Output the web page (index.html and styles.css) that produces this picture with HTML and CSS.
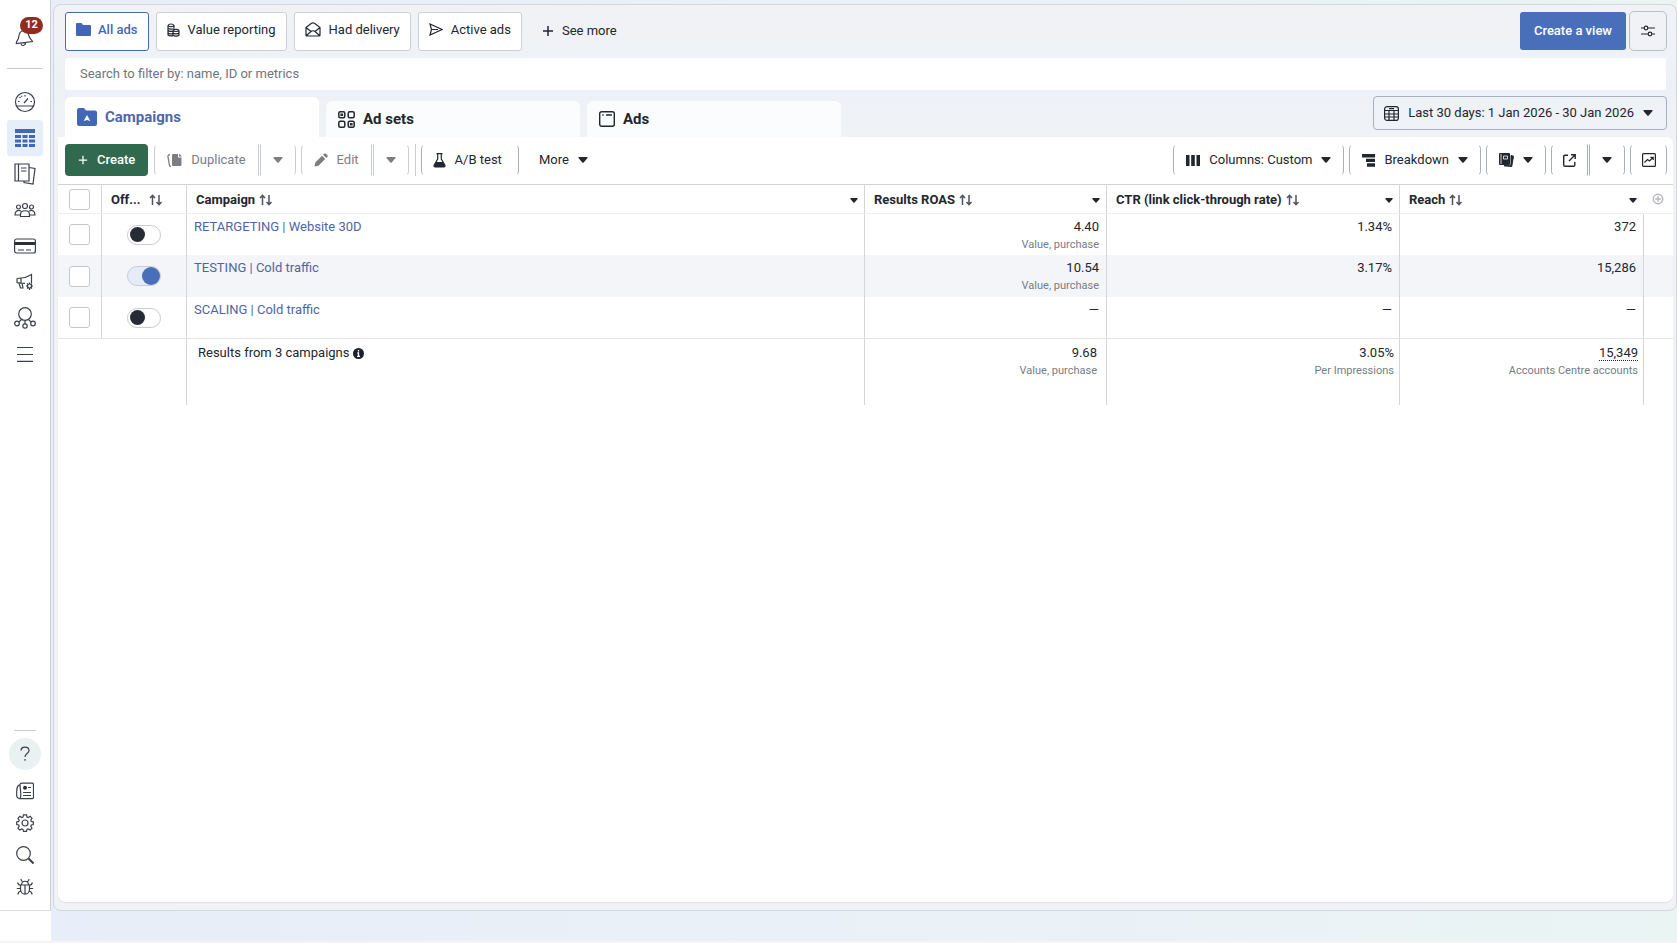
FILE: index.html
```
<!DOCTYPE html>
<html lang="en">
<head>
  <meta charset="UTF-8">
  <title>Ads Manager - Campaigns</title>
  <link rel="stylesheet" href="styles.css">
</head>
<body>
  <!-- shared icons -->
  <svg class="sprite" aria-hidden="true">
    <symbol id="caret" viewBox="0 0 10 6"><path d="M1 0h8q1 0 .5 1L5.700 5.500q-.7.7-1.400 0L.5 1Q0 0 1 0z" fill="currentColor"/></symbol>
    <symbol id="sort" viewBox="0 0 14 12"><path d="M3.500 11V1.500M1 4l2.500-2.700L6 4M10 1v9.500M7.500 8l2.500 2.700L12.500 8" fill="none" stroke="currentColor" stroke-width="1.500"/></symbol>
    <symbol id="plus" viewBox="0 0 12 12"><path d="M6 1v10M1 6h10" stroke="currentColor" stroke-width="1.500"/></symbol>
  </svg>

  <nav class="sidebar">
    <a href="#" class="side-link bell" aria-label="Notifications">
      <svg width="20" height="20" viewBox="0 0 20 20"><path d="M8 2.500C4.500 3.500 4 6 3.700 9 3.500 12 1 13 1.300 15.500L17.500 13.500C17 11.500 15 11.500 14 8 13 4 11 2 8 2.500zM6 15.500c.5 3 4.500 2.500 4.700-.7"/></svg>
      <span class="badge">12</span>
    </a>
    <hr>
    <a href="#" class="side-link" aria-label="Overview">
      <svg width="22" height="22" viewBox="0 0 22 22"><circle cx="11" cy="11" r="9.500"/><path d="M2.500 15h17M10 12l4-4.500M11 4v1.500M5.500 6l1 1M4 10.500h1.500M16.500 10.500H18M7.500 4.700l.5 1"/></svg>
    </a>
    <a href="#" class="side-link active" aria-label="Campaigns">
      <svg width="20" height="20" viewBox="0 0 20 20"><path class="fill" d="M0 1h20v4H0zM0 7h6v3H0zM7.500 7h5v3h-5zM14 7h6v3h-6zM0 11.500h6v3H0zM7.500 11.500h5v3h-5zM14 11.500h6v3h-6zM0 16h6v3H0zM7.500 16h5v3h-5zM14 16h6v3h-6z"/></svg>
    </a>
    <a href="#" class="side-link" aria-label="Ads reporting">
      <svg width="22" height="22" viewBox="0 0 22 22"><path d="M1 1h14v17H1zM4.500 1v17M7 5h5.500M7 8h5.500M15 4.500l6 1-2 15.500-9-1.500v-1.500"/></svg>
    </a>
    <a href="#" class="side-link" aria-label="Audiences">
      <svg width="22" height="16" viewBox="0 0 22 16"><circle cx="11" cy="4" r="2.500"/><circle cx="4.500" cy="5" r="2"/><circle cx="17.500" cy="5" r="2"/><path d="M6.500 14.500v-2c0-5 9-5 9 0v2zM6.500 13H1c0-4 2.500-5.500 6-4M15.500 13H21c0-4-2.500-5.500-6-4"/></svg>
    </a>
    <a href="#" class="side-link" aria-label="Billing">
      <svg width="22" height="16" viewBox="0 0 22 16"><rect x=".6" y="1" width="20.800" height="14" rx="2"/><path d="M4 12h6M12 12h5"/><path class="fill" d="M1 4h20v3H1z"/></svg>
    </a>
    <a href="#" class="side-link" aria-label="Advertising settings">
      <svg width="18" height="18" viewBox="0 0 18 18"><path d="M1 5.500L5 5c5 0 8-2 10.500-3.500V10M1 5.500V9.500c1 .8 6 .3 8 .8M5 5v5M3 10l1.500 5H7l-1-5"/><circle cx="13.500" cy="13" r="2"/><path d="M13.500 9.500v1.500M13.500 15v2M10 13h1.500M15.500 13H17M11 10.500l1.200 1.200M16 10.500l-1.200 1.200M11 15.500l1.200-1.200M16 15.500l-1.200-1.200"/></svg>
    </a>
    <a href="#" class="side-link" aria-label="Events Manager">
      <svg width="22" height="22" viewBox="0 0 22 22"><circle cx="11" cy="7" r="6.300"/><circle cx="3" cy="16.500" r="2.300"/><circle cx="19" cy="16.500" r="2.300"/><circle cx="11" cy="19" r="2.200"/><path d="M11 13.500v3.300M7.500 12.500l-2.700 2.700M14.500 12.500l2.700 2.700"/></svg>
    </a>
    <a href="#" class="side-link" aria-label="All tools">
      <svg width="16" height="16" viewBox="0 0 16 16"><path d="M0 1.500h16M0 8.500h16M0 15.400h16"/></svg>
    </a>

    <div class="side-bottom">
      <hr>
      <a href="#" class="side-link help" aria-label="Help">
        <svg width="12" height="16" viewBox="0 0 12 16"><path d="M2 4.500C2 0 10 0 10 4.500c0 3-4 3-4 6.500M6 13v1.700"/></svg>
      </a>
      <a href="#" class="side-link" aria-label="News">
        <svg width="18" height="18" viewBox="0 0 18 18"><path d="M4 16.500C.5 16.500.5 14 .7 10 .8 6 1 3.500 4 2.500M4 2.500C4 1.500 5 1.200 6 1.200h10c1 0 1.500.5 1.500 1.500v12.500c0 1-.5 1.500-1.500 1.500H4C6 14 4 8 4 2.500zM7 10.500h8M7 13.500h8M12 5.500h3"/><circle class="fill" cx="9" cy="5.800" r="2"/></svg>
      </a>
      <a href="#" class="side-link" aria-label="Settings">
        <svg width="18" height="18" viewBox="0 0 18 18"><circle cx="9" cy="9" r="3"/><path d="M7.500.8h3l.5 2.200 1.300.5L14.200 2.300l1.800 1.900-1.200 1.900.5 1.300 2 .5v2.600l-2 .5-.5 1.300 1.200 1.900-1.800 1.900-1.900-1.200-1.300.5-.5 2h-3L7 15.400l-1.300-.5-1.900 1.200L2 14.200l1.200-1.900L2.700 11l-2-.5V7.900l2-.5.5-1.300L2 4.200l1.800-1.900 1.900 1.200L7 3z"/></svg>
      </a>
      <a href="#" class="side-link" aria-label="Search">
        <svg width="18" height="18" viewBox="0 0 18 18"><circle cx="7.500" cy="7.500" r="6.800"/><path d="M12.500 12.500l5 5" stroke-width="2"/></svg>
      </a>
      <a href="#" class="side-link" aria-label="Report a problem">
        <svg width="18" height="18" viewBox="0 0 18 18"><path d="M4.500 7h9v4c0 7-9 7-9 0zM5.500 7c0-5 7-5 7 0M9 7v9M5 1c0 2 1 2.500 2 2.800M13 1c0 2-1 2.500-2 2.800M1.500 4.500C2 6.500 3 7 4.500 7.500M16.500 4.500C16 6.500 15 7 13.500 7.500M.8 10.500h3.700M13.500 10.500h3.700M5 13c-2 .5-3 1.500-3 3.500M13 13c2 .5 3 1.500 3 3.500"/></svg>
      </a>
    </div>
  </nav>

  <main class="panel">
    <div class="views">
      <button class="pill selected">
        <svg width="15" height="13" viewBox="0 0 15 13"><path d="M1 0h4.500L7 2h7q1 0 1 1v9q0 1-1 1H1q-1 0-1-1V1q0-1 1-1z" fill="currentColor"/></svg>
        All ads
      </button>
      <button class="pill">
        <svg class="line" width="13" height="14" viewBox="0 0 13 14"><path d="M1 2.500v9.500c1 1 3 1 5 .7M1 2.500C2 .5 6 .5 7 2.500c-1 1.500-5 1.500-6 0M7 2.500v3M1 5c1 1.300 4 1.300 5.500.7M1 7.500c1 1 3 1 4.500.7M1 10c1 1 3 1 4.500.7M6 7.500v4.700c1 1.300 5 1.300 6 0V7.500M6 7.500C7 6 11 6 12 7.500c-1 1.300-5 1.300-6 0M6 10c1 1.200 5 1.200 6 0"/></svg>
        Value reporting
      </button>
      <button class="pill">
        <svg class="line" width="16" height="15" viewBox="0 0 16 15"><path d="M1 5.500L6.500 1.200q1.500-.8 3 0L15 5.500V13q0 1-1 1H2q-1 0-1-1zM1 5.500L6 9.500M15 5.500L10 9.500M1.500 13.500L6 9.500q2-1.500 4 0l4.500 4"/></svg>
        Had delivery
      </button>
      <button class="pill">
        <svg class="line" width="14" height="13" viewBox="0 0 14 13"><path d="M1 1l12 5.500L1 12l1.500-5.500zM2.500 6.500H9"/></svg>
        Active ads
      </button>
      <button class="see-more"><svg width="12" height="12"><use href="#plus"/></svg>See more</button>
      <button class="create-view">Create a view</button>
      <button class="customise" aria-label="Customise views">
        <svg class="line" width="14" height="12" viewBox="0 0 14 12"><path d="M0 3h3M7 3h7M0 9h7M11 9h3"/><circle cx="5" cy="3" r="1.800"/><circle cx="9" cy="9" r="1.800"/></svg>
      </button>
    </div>

    <input class="search" type="text" aria-label="Search" placeholder="Search to filter by: name, ID or metrics">

    <div class="tab-row">
      <button class="tab current">
        <svg width="20" height="18" viewBox="0 0 20 18"><path d="M2 0h5l2 2.500h9q2 0 2 2V16q0 2-2 2H2q-2 0-2-2V2Q0 0 2 0z" fill="currentColor"/><path d="M10 7l3.300 6L10 12l-3.300 1z" fill="#fff"/></svg>
        Campaigns
      </button>
      <button class="tab">
        <svg class="line" width="17" height="17" viewBox="0 0 17 17"><g stroke-width="1.500"><rect x=".8" y=".8" width="6" height="6" rx="1.500"/><rect x="10.200" y=".8" width="6" height="6" rx="1.500"/><rect x=".8" y="10.200" width="6" height="6" rx="1.500"/><rect x="10.200" y="10.200" width="6" height="6" rx="1.500"/></g><path d="M3 3h1.500v1.500H3zM12.500 12.500H14V14h-1.500z"/></svg>
        Ad sets
      </button>
      <button class="tab">
        <svg class="line" width="16" height="16" viewBox="0 0 16 16"><rect x=".7" y=".7" width="14.600" height="14.600" rx="2" stroke-width="1.400"/><path d="M3.300 4h1.400M7 4h6" stroke-width="1.400"/></svg>
        Ads
      </button>
      <button class="date-range">
        <svg class="line" width="15" height="15" viewBox="0 0 15 15"><rect x=".6" y=".6" width="13.800" height="13.800" rx="2.500"/><path d="M1 4.500h13M1 8h13M1 11h13M5 4.500v10M10 4.500v10M5 2.700h5"/></svg>
        Last 30 days: 1 Jan 2026 - 30 Jan 2026
        <svg width="10" height="6"><use href="#caret"/></svg>
      </button>
    </div>

    <section class="card">
      <div class="toolbar">
        <button class="tool create"><svg width="10" height="10"><use href="#plus"/></svg>Create</button>
        <div class="split muted">
          <button class="tool">
            <svg width="15" height="14" viewBox="0 0 15 14"><path d="M6 1h5v3.500h3.500V12q0 1-1 1H6q-1 0-1-1V2q0-1 1-1z" fill="currentColor"/><path d="M12 .5V3.500h3z" fill="currentColor"/><path d="M3 1.500Q.5 2 1 4l1.500 8.500q.5 1 1.500 1" fill="none" stroke="currentColor" stroke-width="1.300"/></svg>
            Duplicate
          </button>
          <button class="tool drop" aria-label="Duplicate options"><svg width="10" height="6"><use href="#caret"/></svg></button>
        </div>
        <div class="split muted">
          <button class="tool">
            <svg width="14" height="14" viewBox="0 0 14 14"><path d="M.5 13.500l.8-4L8 2.800 11.200 6l-6.700 6.700zM9 1.800l1-1q1-.8 1.900 0l1.400 1.300q.8 1 0 1.900l-1 1z" fill="currentColor"/></svg>
            Edit
          </button>
          <button class="tool drop" aria-label="Edit options"><svg width="10" height="6"><use href="#caret"/></svg></button>
        </div>
        <span class="rule"></span>
        <button class="tool ab">
          <svg width="13" height="15" viewBox="0 0 13 15"><path d="M3.500.7h6M4.700 1v5L1.200 12q-.7 2 1 2h8.600q1.700 0 1-2L8.300 6V1" fill="none" stroke="currentColor" stroke-width="1.200"/><path d="M3.200 9h6.600l2 3.500q.5 1.500-1 1.500H2.200q-1.500 0-1-1.500z" fill="currentColor"/></svg>
          A/B test
        </button>
        <button class="tool more">More<svg width="10" height="6"><use href="#caret"/></svg></button>

        <div class="tools-right">
          <button class="tool">
            <svg width="14" height="11" viewBox="0 0 14 11"><path d="M0 0h3.500v11H0zM5.200 0h3.600v11H5.200zM10.500 0H14v11h-3.500z" fill="currentColor"/></svg>
            Columns: Custom
            <svg width="10" height="6"><use href="#caret"/></svg>
          </button>
          <button class="tool">
            <svg width="13" height="13" viewBox="0 0 13 13"><path d="M0 0h13v3.500H0zM4 4.700h9v3.300H4zM5 9.300h8v3.500H5z" fill="currentColor"/></svg>
            Breakdown
            <svg width="10" height="6"><use href="#caret"/></svg>
          </button>
          <button class="tool" aria-label="Reports">
            <svg width="15" height="14" viewBox="0 0 15 14"><path d="M1 0h9q1 0 1 1v10q0 1-1 1H1q-1 0-1-1V1q0-1 1-1z" fill="currentColor"/><path d="M12 2.500l2.500.7-1.800 10.300L5 12.700h6q1-.4 1-1.700z" fill="currentColor" stroke="currentColor"/><path d="M2 1v10M4.500 3h4v3h-4z" fill="none" stroke="#fff" stroke-width=".8"/></svg>
            <svg width="10" height="6"><use href="#caret"/></svg>
          </button>
          <div class="split">
            <button class="tool export" aria-label="Export">
              <svg class="line" width="13" height="13" viewBox="0 0 13 13"><path d="M5 1.200H2q-1.300 0-1.300 1.300v8.500q0 1.300 1.300 1.300h8.500q1.300 0 1.300-1.300V8M8 .8h4.200V5M12 1L6 7" stroke-width="1.400"/></svg>
            </button>
            <button class="tool drop" aria-label="Export options"><svg width="10" height="6"><use href="#caret"/></svg></button>
          </div>
          <button class="tool chart" aria-label="View charts">
            <svg class="line" width="14" height="14" viewBox="0 0 14 14"><rect x=".6" y=".6" width="12.800" height="12.800" rx="1"/><path d="M2.500 9.500l3-3 2 1.500L11 4.500M8.500 4.300H11.200V7"/></svg>
          </button>
        </div>
      </div>

      <table>
        <colgroup>
          <col class="c-check"><col class="c-off"><col><col class="c-roas"><col class="c-ctr"><col class="c-reach"><col class="c-add">
        </colgroup>
        <thead>
          <tr>
            <th><input type="checkbox" class="box" aria-label="Select all"></th>
            <th><div class="head">Off...<svg class="sort far" width="14" height="12"><use href="#sort"/></svg></div></th>
            <th><div class="head">Campaign<svg class="sort" width="14" height="12"><use href="#sort"/></svg><svg class="menu" width="8" height="5" viewBox="0 0 10 6"><use href="#caret"/></svg></div></th>
            <th><div class="head">Results ROAS<svg class="sort" width="14" height="12"><use href="#sort"/></svg><svg class="menu" width="8" height="5" viewBox="0 0 10 6"><use href="#caret"/></svg></div></th>
            <th><div class="head">CTR (link click-through rate)<svg class="sort" width="14" height="12"><use href="#sort"/></svg><svg class="menu" width="8" height="5" viewBox="0 0 10 6"><use href="#caret"/></svg></div></th>
            <th><div class="head">Reach<svg class="sort" width="14" height="12"><use href="#sort"/></svg><svg class="menu" width="8" height="5" viewBox="0 0 10 6"><use href="#caret"/></svg></div></th>
            <th><button class="add" aria-label="Add column"><svg width="12" height="12" viewBox="0 0 12 12"><circle cx="6" cy="6" r="4.700" fill="none" stroke="#b4b6bc" stroke-width="1.500"/><path d="M6 3.200v5.600M3.200 6h5.600" stroke="#b4b6bc" stroke-width="1.500"/></svg></button></th>
          </tr>
        </thead>
        <tbody>
          <tr>
            <td><input type="checkbox" class="box" aria-label="Select RETARGETING"></td>
            <td><input type="checkbox" class="switch" aria-label="Toggle RETARGETING"></td>
            <td><a href="#">RETARGETING | Website 30D</a></td>
            <td class="num">4.40<small>Value, purchase</small></td>
            <td class="num">1.34%</td>
            <td class="num">372</td>
            <td></td>
          </tr>
          <tr class="hover">
            <td><input type="checkbox" class="box" aria-label="Select TESTING"></td>
            <td><input type="checkbox" class="switch" aria-label="Toggle TESTING" checked></td>
            <td><a href="#">TESTING | Cold traffic</a></td>
            <td class="num">10.54<small>Value, purchase</small></td>
            <td class="num">3.17%</td>
            <td class="num">15,286</td>
            <td></td>
          </tr>
          <tr>
            <td><input type="checkbox" class="box" aria-label="Select SCALING"></td>
            <td><input type="checkbox" class="switch" aria-label="Toggle SCALING"></td>
            <td><a href="#">SCALING | Cold traffic</a></td>
            <td class="num">—</td>
            <td class="num">—</td>
            <td class="num">—</td>
            <td></td>
          </tr>
        </tbody>
        <tfoot>
          <tr>
            <td colspan="2"></td>
            <td>Results from 3 campaigns <svg class="info" width="11" height="11" viewBox="0 0 11 11"><circle cx="5.500" cy="5.500" r="5.500" fill="#1c2028"/><path d="M5.500 2v1.600M4.300 5h1.200v3M4 8.300h3" stroke="#fff" stroke-width="1.300" fill="none"/></svg></td>
            <td class="num roas">9.68<small>Value, purchase</small></td>
            <td class="num">3.05%<small>Per Impressions</small></td>
            <td class="num"><span class="dotted">15,349</span><small>Accounts Centre accounts</small></td>
            <td></td>
          </tr>
        </tfoot>
      </table>
    </section>
  </main>
</body>
</html>
```
FILE: styles.css
```
* {
  box-sizing: border-box;
}

body {
  margin: 0;
  min-height: 100vh;
  display: flex;
  padding-bottom: 30px;
  border-bottom: 2px solid #f3f4f5;
  font-family: Roboto, "Liberation Sans", sans-serif;
  font-size: 13px;
  line-height: 18px;
  color: #22262f;
  background: linear-gradient(to right, #e7eef9, #eaf1f7 60%, #eaf4f3);
}

button, input {
  font: inherit;
  color: inherit;
}

button {
  display: flex;
  align-items: center;
  justify-content: center;
  padding: 0;
  border: none;
  background: none;
  white-space: nowrap;
}

svg {
  flex-shrink: 0;
}

.sprite {
  position: absolute;
  width: 0;
  height: 0;
}

.line {
  fill: none;
  stroke: currentColor;
  stroke-width: 1.2;
}

/* sidebar */
.sidebar {
  width: 51px;
  flex-shrink: 0;
  display: flex;
  flex-direction: column;
  align-items: center;
  padding: 20px 0 7px;
  background: #fff;
  border-right: 1px solid #cdd0d6;
  border-bottom: 1px solid #dcdee2;
  box-shadow: 0 30px #fff;
}

.sidebar hr {
  width: 36px;
  margin: 12px 0 15px;
  border: none;
  border-top: 1px solid #c8cace;
}

.side-link {
  width: 36px;
  height: 36px;
  display: flex;
  align-items: center;
  justify-content: center;
  position: relative;
  border-radius: 3px;
}

.side-link svg {
  fill: none;
  stroke: #3a3f4c;
  stroke-width: 1.2;
}

.side-link .fill {
  fill: #2b303b;
  stroke: none;
}

.active {
  background: #e6eef9;
}

.active .fill {
  fill: #4267b8;
}

.badge {
  position: absolute;
  top: -3px;
  right: 0;
  width: 23px;
  height: 17px;
  border-radius: 9px;
  background: #8f2d22;
  color: #fff;
  font-size: 11px;
  font-weight: bold;
  line-height: 16px;
  text-align: center;
}

.side-bottom {
  margin-top: auto;
  display: flex;
  flex-direction: column;
  align-items: center;
}

.side-bottom hr {
  width: 22px;
  margin: 0 0 7px;
}

.side-bottom .side-link {
  height: 32px;
}

.side-bottom .help {
  width: 32px;
  margin-bottom: 5px;
  border-radius: 50%;
  background: #e9f2f1;
}

/* main panel */
.panel {
  flex: 1;
  min-width: 0;
  display: flex;
  flex-direction: column;
  margin: 4px 0 0 2px;
  padding: 6px 3px 8px 4px;
  border: 1px solid #d3d6db;
  border-radius: 8px;
  background: linear-gradient(#f1f2f6, #edf1f5 80px, #f0f2f6 130px);
}

.views {
  display: flex;
  align-items: center;
  gap: 7px;
  padding: 0 6px 0 7px;
}

.pill {
  height: 39px;
  gap: 8px;
  padding: 0 10px 3px;
  border: 1px solid #ccd0d6;
  border-radius: 3px;
  background: #fff;
}

.pill.selected {
  gap: 7px;
  border-color: #4c69b0;
  color: #4267b8;
  font-weight: 500;
}

.see-more {
  gap: 8px;
  padding: 0 13px;
}

.create-view {
  height: 38px;
  margin-left: auto;
  margin-right: -4px;
  padding: 0 14px;
  border-radius: 3px;
  background: #4a6fba;
  color: #fff;
  font-weight: 500;
}

.customise {
  width: 38px;
  height: 40px;
  border: 1px solid #b9bfc9;
  border-radius: 5px;
}

.search {
  height: 32px;
  margin: 7px 7px;
  padding: 0 15px 2px;
  border: none;
  border-radius: 3px;
  background: #fff;
}

.search::placeholder {
  color: #70757d;
  opacity: 1;
}

.tab-row {
  display: flex;
  align-items: flex-end;
  gap: 7px;
  padding: 0 6px 0 7px;
}

.tab {
  flex: 0 1 254px;
  height: 36px;
  justify-content: flex-start;
  gap: 8px;
  padding: 0 12px;
  border-radius: 6px 6px 0 0;
  background: #fbfcfe;
  font-size: 15px;
  font-weight: bold;
}

.tab.current {
  height: 40px;
  background: #fff;
  color: #4e68a8;
}

.tab.current svg {
  color: #4267b8;
}

.date-range {
  align-self: flex-start;
  height: 34px;
  margin: -1px 0 7px auto;
  gap: 9px;
  padding: 0 13px 0 10px;
  border: 1px solid #a9b0bc;
  border-radius: 4px;
}

.card {
  flex: 1;
  min-width: 0;
  border-radius: 0 6px 8px 8px;
  background: #fff;
  box-shadow: 0 1px 1px #dfe1e5;
}

/* toolbar */
.toolbar {
  display: flex;
  align-items: center;
  gap: 5px;
  padding: 7px 6px 8px 7px;
  border-bottom: 1px solid #cfd2d6;
}

/* the frames are open at the top and bottom */
.tool {
  height: 32px;
  gap: 9px;
  padding: 0 11px;
  border: 1px solid #aab0bb;
  border-top-color: transparent;
  border-bottom-color: transparent;
  border-radius: 5px;
}

.split {
  display: flex;
  gap: 1px;
}

.split .tool:first-child {
  border-radius: 5px 0 0 5px;
}

.split .tool:last-child {
  border-radius: 0 5px 5px 0;
}

.muted .tool {
  padding: 0 12px;
  border-left-color: #c9ccd2;
  border-right-color: #c9ccd2;
  color: #7b7e83;
}

.tool.drop {
  width: 36px;
}

.tool.create {
  margin-right: 1px;
  padding: 0 13px;
  border: none;
  border-radius: 4px;
  background: #31694e;
  color: #fff;
  font-weight: 500;
}

.rule {
  width: 1px;
  height: 32px;
  margin-left: 1px;
  background: #c9ccd2;
}

.tool.ab {
  padding-right: 16px;
}

.tool.more {
  padding-left: 15px;
  border: none;
}

.tools-right {
  display: flex;
  gap: 5px;
  margin-left: auto;
}

.tools-right > .tool {
  padding: 0 12px;
}

.tool.chart, .tool.export {
  width: 37px;
  padding: 0;
}

/* table */
table {
  width: 100%;
  table-layout: fixed;
  border-collapse: separate;
  border-spacing: 0;
}

.c-check { width: 44px; }
.c-off { width: 85px; }
.c-roas { width: 242px; }
.c-ctr { width: 293px; }
.c-reach { width: 244px; }
.c-add { width: 29px; }

th, td {
  padding: 0 7px;
  border-right: 1px solid #d3d5da;
  text-align: left;
}

th:last-child, td:last-child {
  border-right: none;
}

th {
  height: 29px;
  padding: 2px 6px 0 9px;
  border-bottom: 1px solid #eceef1;
  font-weight: bold;
}

th:nth-child(6) {
  border-right-color: transparent;
}

td {
  height: 41px;
  padding-top: 4px;
  vertical-align: top;
}

.hover td {
  height: 42px;
  background: #f4f5f8;
}

tbody tr:last-child td {
  height: 42px;
  border-bottom: 1px solid #e2e4e8;
}

.head {
  display: flex;
  align-items: center;
  gap: 4px;
  white-space: nowrap;
}

.head .sort {
  color: #50545e;
}

.head .far {
  margin-left: 4px;
}

.head .menu {
  margin-left: auto;
}

th:first-child, td:first-child,
tbody td:nth-child(2) {
  padding: 0;
  text-align: center;
  vertical-align: middle;
}

.num {
  text-align: right;
}

small {
  display: block;
  font-size: 11px;
  line-height: 17px;
  color: #777c85;
}

td a {
  color: #4f65a3;
  text-decoration: none;
}

tfoot td {
  height: 66px;
  padding: 5px 5px 0 11px;
}

tfoot .roas {
  padding-right: 9px;
}

.dotted {
  border-bottom: 1px dotted #22262f;
}

.info {
  vertical-align: -2px;
}

th:last-child {
  padding: 0 8px;
}

.box {
  appearance: none;
  display: block;
  width: 21px;
  height: 21px;
  margin: 0 auto;
  border: 1px solid #c4c8ce;
  border-radius: 3px;
  background: #fff;
}

.box:checked {
  background: #4267b8;
}

.switch {
  appearance: none;
  display: flex;
  align-items: center;
  width: 34px;
  height: 20px;
  margin: 0 auto;
  padding: 0 2px;
  border: 1px solid #c9ccd1;
  border-radius: 10px;
  background: #fff;
}

.switch::before {
  content: "";
  width: 15px;
  height: 15px;
  border-radius: 50%;
  background: #272b35;
}

.switch:checked {
  justify-content: flex-end;
  padding: 0;
  background: #e4ecf8;
}

.switch:checked::before {
  width: 18px;
  height: 18px;
  background: #4a6fba;
}
```
